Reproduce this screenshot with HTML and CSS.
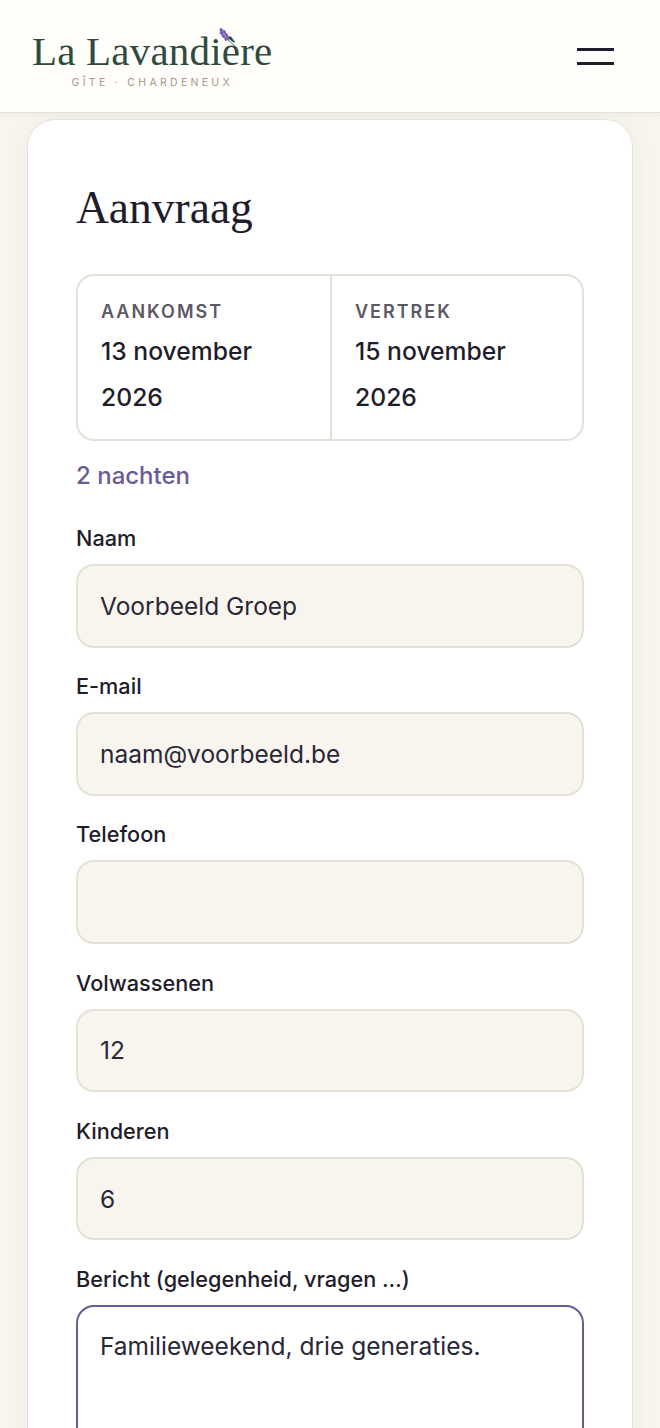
FILE: index.html
```html
<!DOCTYPE html>
<html lang="nl">
<head>
    <meta charset="UTF-8">
    <meta name="viewport" content="width=device-width, initial-scale=1.0">
    <title>La Lavandière</title>
    <link rel="stylesheet" href="styles.css">
</head>
<body>
    <header class="site-header">
        <a class="logo" href="#">
            <span class="logo-name">La Lavandière</span>
            <svg class="logo-sprig" width="20" height="21" viewBox="0 0 20 21">
                <path d="M7 10L18 20" stroke="#3f5a4c" stroke-width="0.9" fill="none"/>
                <g fill="#7a5fb5">
                    <ellipse cx="2.4" cy="2" rx="2" ry="1.5" transform="rotate(50 2.4 2)"/>
                    <ellipse cx="2.6" cy="5" rx="2.2" ry="1.6" transform="rotate(50 2.6 5)"/>
                    <ellipse cx="5.4" cy="4" rx="2" ry="1.5" transform="rotate(50 5.4 4)"/>
                    <ellipse cx="4.4" cy="8" rx="2.2" ry="1.6" transform="rotate(50 4.4 8)"/>
                    <ellipse cx="7.4" cy="7" rx="2.2" ry="1.6" transform="rotate(50 7.4 7)"/>
                    <ellipse cx="7" cy="11" rx="2" ry="1.5" transform="rotate(50 7 11)"/>
                    <ellipse cx="9" cy="10.2" rx="1.6" ry="1.3" transform="rotate(50 9 10.2)"/>
                </g>
            </svg>
            <span class="logo-sub">GÎTE · CHARDENEUX</span>
        </a>
        <button class="menu-button" aria-label="Menu">
            <span class="menu-line"></span>
            <span class="menu-line"></span>
        </button>
    </header>

    <main class="page">
        <section class="card">
            <h1 class="card-title">Aanvraag</h1>

            <div class="dates">
                <div class="date-cell">
                    <div class="date-label">AANKOMST</div>
                    <div class="date-value">13 november 2026</div>
                </div>
                <div class="date-cell">
                    <div class="date-label">VERTREK</div>
                    <div class="date-value">15 november 2026</div>
                </div>
            </div>
            <p class="nights">2 nachten</p>

            <form class="form">
                <div class="field">
                    <label class="field-label" for="naam">Naam</label>
                    <input class="field-input" type="text" id="naam" value="Voorbeeld Groep">
                </div>
                <div class="field">
                    <label class="field-label" for="email">E-mail</label>
                    <input class="field-input" type="text" id="email" value="naam@voorbeeld.be">
                </div>
                <div class="field">
                    <label class="field-label" for="telefoon">Telefoon</label>
                    <input class="field-input" type="text" id="telefoon">
                </div>
                <div class="field">
                    <label class="field-label" for="volwassenen">Volwassenen</label>
                    <input class="field-input" type="text" id="volwassenen" value="12">
                </div>
                <div class="field">
                    <label class="field-label" for="kinderen">Kinderen</label>
                    <input class="field-input" type="text" id="kinderen" value="6">
                </div>
                <div class="field">
                    <label class="field-label" for="bericht">Bericht (gelegenheid, vragen …)</label>
                    <textarea class="field-input field-area" id="bericht">Familieweekend, drie generaties.</textarea>
                </div>
            </form>
        </section>
    </main>
</body>
</html>
```

FILE: styles.css
```css
* {
    box-sizing: border-box;
}
html, body {
    height: 1428px;
    overflow: hidden;
}
body {
    margin: 0;
    background-color: #f8f5ef;
    color: #1f1d2b;
    font-family: "Inter", "Liberation Sans", sans-serif;
}
.site-header {
    position: relative;
    z-index: 1;
    height: 113px;
    padding: 0 46px 0 32px;
    display: flex;
    align-items: center;
    justify-content: space-between;
    background-color: #fffefb;
    border-bottom: 1px solid #e5e1d8;
    box-shadow: 0 2px 6px rgba(60, 50, 30, 0.05);
}
.logo {
    position: relative;
    display: flex;
    flex-direction: column;
    align-items: center;
    color: #2f4a3e;
    text-decoration: none;
    margin-top: 6px;
}
.logo-name {
    font-family: "Liberation Serif", serif;
    font-size: 41px;
    line-height: 42px;
    letter-spacing: 0.2px;
}
.logo-sprig {
    position: absolute;
    left: 187px;
    top: -2px;
}
.logo-sub {
    margin-top: 5px;
    font-size: 10.5px;
    line-height: 12px;
    letter-spacing: 3.3px;
    color: #a39a87;
}
.menu-button {
    width: 37px;
    padding: 0;
    display: flex;
    flex-direction: column;
    gap: 11px;
    background: none;
    border: none;
}
.menu-line {
    display: block;
    height: 3px;
    background-color: #1f1d2b;
}
.page {
    padding: 6px 27px 0;
}
.card {
    height: 1400px;
    padding: 59px 48px 0;
    background-color: #fff;
    border: 1px solid #e5e1d8;
    border-radius: 28px;
    box-shadow: 0 4px 24px rgba(60, 50, 30, 0.05);
}
.card-title {
    margin: 0;
    font-family: "Liberation Serif", serif;
    font-size: 45.5px;
    line-height: 58px;
    font-weight: 400;
}
.dates {
    margin-top: 37px;
    display: grid;
    grid-template-columns: 1fr 1fr;
    height: 167px;
    border: 2px solid #e5e1d8;
    border-radius: 18px;
}
.date-cell {
    padding: 24px 23px 0;
}
.date-cell + .date-cell {
    border-left: 2px solid #e5e1d8;
}
.date-label {
    font-size: 18px;
    line-height: 24px;
    font-weight: 600;
    letter-spacing: 2px;
    color: #5c5866;
}
.date-value {
    margin-top: 4px;
    font-size: 24.7px;
    line-height: 46px;
    font-weight: 500;
}
.nights {
    margin: 19px 0 0;
    font-size: 24px;
    line-height: 32px;
    font-weight: 500;
    color: #6b5b95;
}
.form {
    margin-top: 31px;
    display: flex;
    flex-direction: column;
    gap: 23.7px;
}
.field {
    display: flex;
    flex-direction: column;
    gap: 11px;
}
.field-label {
    font-size: 21.7px;
    line-height: 30px;
    font-weight: 500;
}
.field-input {
    display: block;
    width: 100%;
    height: 83.5px;
    padding: 0 22px;
    font: inherit;
    font-size: 24.5px;
    color: #2a2836;
    background-color: #f8f5ef;
    border: 2px solid #e5e1d8;
    border-radius: 18px;
    outline: none;
}
.field-area {
    height: 220px;
    padding-top: 24px;
    background-color: #fff;
    border-color: #6b5b95;
    resize: none;
}
```
